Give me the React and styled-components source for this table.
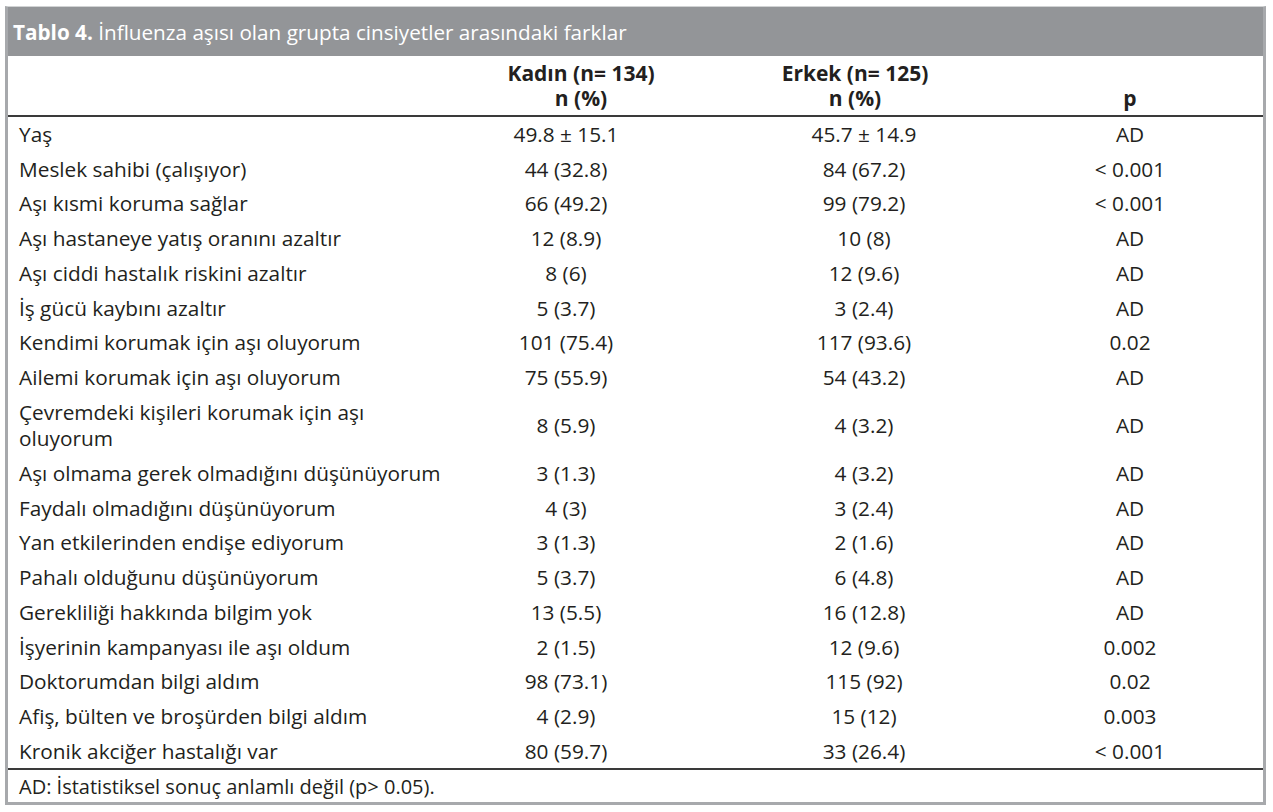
import React from "react";
import styled, { createGlobalStyle } from "styled-components";

const Global = createGlobalStyle`
  html, body { margin: 0; padding: 0; background: #ffffff; }
  body { font-family: "Open Sans", "Noto Sans", sans-serif; font-stretch: 88%; color: #231f20; }
`;

const Page = styled.div`
  width: 1273px;
  height: 812px;
  padding: 6px 7px 6px 5px;
  box-sizing: border-box;
`;

const Frame = styled.div`
  border-left: 3px solid #a7a9ac;
  border-right: 3px solid #a7a9ac;
  border-bottom: 3px solid #a7a9ac;
  border-top: 1px solid #d1d3d4;
  background: #fff;
`;

const TitleBar = styled.div`
  background: #939598;
  height: 49px;
  display: flex;
  align-items: center;
  padding-left: 5px;
  color: #ffffff;
  font-size: 20.7px;
`;

const Bold = styled.span`
  font-weight: 700;
`;

const Table = styled.div`
  display: grid;
  grid-template-columns: 442px 232px 364px 1fr;
`;

const HeadCell = styled.div`
  font-weight: 700;
  font-size: 21px;
  line-height: 25px;
  text-align: center;
  padding: 5px ${(p) => p.$pr || 0}px 4px ${(p) => p.$pl || 0}px;
  display: flex;
  flex-direction: column;
  justify-content: flex-end;
  border-bottom: 2px solid #3a3a3a;
`;

const Cell = styled.div`
  font-size: 20.8px;
  line-height: 26.7px;
  padding: 4px ${(p) => (p.$first ? 2 : p.$pr || 0)}px 4px ${(p) => (p.$first ? 11 : 0)}px;
  text-align: ${(p) => (p.$first ? "left" : "center")};
  display: flex;
  align-items: center;
  justify-content: ${(p) => (p.$first ? "flex-start" : "center")};
`;

const Footer = styled.div`
  border-top: 2px solid #3a3a3a;
  font-size: 20px;
  height: 32px;
  display: flex;
  align-items: center;
  padding-left: 11px;
`;

const rows = [
  ["Yaş", "49.8 ± 15.1", "45.7 ± 14.9", "AD"],
  ["Meslek sahibi (çalışıyor)", "44 (32.8)", "84 (67.2)", "< 0.001"],
  ["Aşı kısmi koruma sağlar", "66 (49.2)", "99 (79.2)", "< 0.001"],
  ["Aşı hastaneye yatış oranını azaltır", "12 (8.9)", "10 (8)", "AD"],
  ["Aşı ciddi hastalık riskini azaltır", "8 (6)", "12 (9.6)", "AD"],
  ["İş gücü kaybını azaltır", "5 (3.7)", "3 (2.4)", "AD"],
  ["Kendimi korumak için aşı oluyorum", "101 (75.4)", "117 (93.6)", "0.02"],
  ["Ailemi korumak için aşı oluyorum", "75 (55.9)", "54 (43.2)", "AD"],
  ["Çevremdeki kişileri korumak için aşı oluyorum", "8 (5.9)", "4 (3.2)", "AD"],
  ["Aşı olmama gerek olmadığını düşünüyorum", "3 (1.3)", "4 (3.2)", "AD"],
  ["Faydalı olmadığını düşünüyorum", "4 (3)", "3 (2.4)", "AD"],
  ["Yan etkilerinden endişe ediyorum", "3 (1.3)", "2 (1.6)", "AD"],
  ["Pahalı olduğunu düşünüyorum", "5 (3.7)", "6 (4.8)", "AD"],
  ["Gerekliliği hakkında bilgim yok", "13 (5.5)", "16 (12.8)", "AD"],
  ["İşyerinin kampanyası ile aşı oldum", "2 (1.5)", "12 (9.6)", "0.002"],
  ["Doktorumdan bilgi aldım", "98 (73.1)", "115 (92)", "0.02"],
  ["Afiş, bülten ve broşürden bilgi aldım", "4 (2.9)", "15 (12)", "0.003"],
  ["Kronik akciğer hastalığı var", "80 (59.7)", "33 (26.4)", "< 0.001"],
];

export default function App() {
  return (
    <Page>
      <Global />
      <Frame>
        <TitleBar>
          <Bold>Tablo 4.</Bold>&nbsp;İnfluenza aşısı olan grupta cinsiyetler arasındaki farklar
        </TitleBar>
        <Table>
          <HeadCell />
          <HeadCell $pl={30}>
            <div>Kadın (n= 134)</div>
            <div>n (%)</div>
          </HeadCell>
          <HeadCell $pr={18}>
            <div>Erkek (n= 125)</div>
            <div>n (%)</div>
          </HeadCell>
          <HeadCell $pr={49}>
            <div>p</div>
          </HeadCell>
          {rows.map((r, i) => (
            <React.Fragment key={i}>
              <Cell $first>{r[0]}</Cell>
              <Cell>{r[1]}</Cell>
              <Cell>{r[2]}</Cell>
              <Cell $pr={49}>{r[3]}</Cell>
            </React.Fragment>
          ))}
        </Table>
        <Footer>AD: İstatistiksel sonuç anlamlı değil (p&gt; 0.05).</Footer>
      </Frame>
    </Page>
  );
}
